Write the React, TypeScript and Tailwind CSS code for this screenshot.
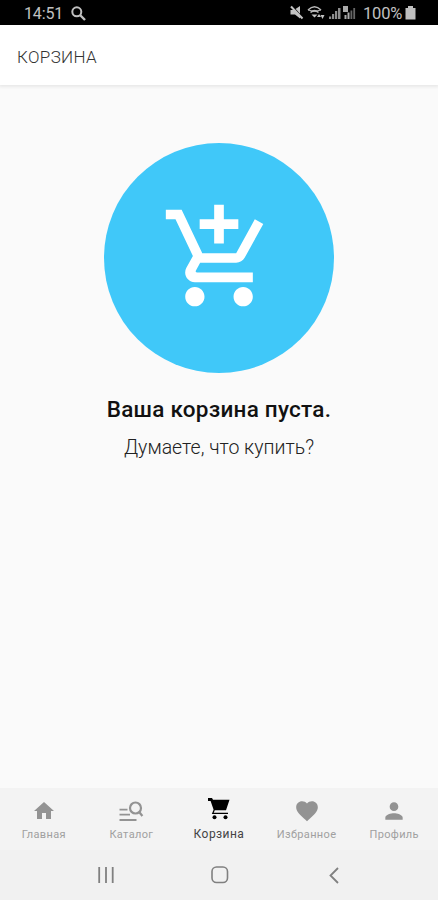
import React from "react";
import { MdAddShoppingCart, MdFavorite, MdHome, MdPerson } from "react-icons/md";

function CatalogIcon() {
  return (
    <svg width="26" height="24" viewBox="0 0 26 24" fill="none" stroke="currentColor" strokeWidth="2">
      <path d="M1.5 10.7h8M1.5 15.7h10.5M1.5 21h17" strokeWidth="1.8" />
      <circle cx="17.5" cy="9" r="5.5" strokeWidth="2.2" />
      <path d="M21.2 13l3.2 4" strokeWidth="2.2" />
    </svg>
  );
}

function CartIcon() {
  return (
    <svg width="24" height="24" viewBox="0 0 24 24" fill="currentColor">
      <path d="M1 1H5L6 2.8H22.5L19 13.2H6.8L3.6 4H1z" />
      <path d="M7.2 13L5.8 16.3H21" fill="none" stroke="currentColor" strokeWidth="1.3" />
      <circle cx="7.5" cy="20.3" r="2" />
      <circle cx="18.5" cy="20.3" r="2" />
    </svg>
  );
}

function StatusIcons() {
  return (
    <svg className="ml-[289px] shrink-0" width="68" height="17" viewBox="0 0 68 17" fill="#c4c4c4">
      <path d="M1.5 6h3.5L11 2v12.500l-5-4H1.500z" />
      <path d="M3 2l11 12" stroke="#000" strokeWidth="1.2" />
      <path d="M2 2.500l11.500 12" stroke="#c4c4c4" strokeWidth="2" />
      <g fill="none" stroke="#b8b8b8" strokeWidth="1.5">
        <path d="M19 6q6.5-6.5 13 0M21.500 8.500q4-3.800 8 0" />
        <path d="M19 6q6.500 3 13 0" strokeWidth="1" />
      </g>
      <path d="M22.5 10.500h6l-3 3zM28 13l2-3 2 3zM31.500 11h4l-2 4z" />
      <path d="M40 12.500h2.200V15H40zM43 10h2.200v5H43zM46 7h2.200v8H46zM49 4h2.500v11H49z" fill="#8c8c8c" />
      <path d="M54 2h5v6h-5zM55.500 11h2v4h-2zM58.500 8.500h2V15h-2z" fill="#aaa" />
      <path d="M61.500 6.500h1.800V15h-1.800zM64.300 4h1.800v11h-1.800z" fill="#666" />
    </svg>
  );
}

const tabs = [
  { label: "Главная", icon: <MdHome size={24} /> },
  { label: "Каталог", icon: <CatalogIcon /> },
  { label: "Корзина", active: true, icon: <CartIcon /> },
  { label: "Избранное", icon: <MdFavorite size={26} /> },
  { label: "Профиль", icon: <MdPerson size={26} /> },
];

export default function App() {
  return (
    <div className="flex h-[900px] w-[438px] flex-col overflow-hidden bg-[#fafafa] font-[Roboto,sans-serif]">
      <div className="flex h-[25px] shrink-0 items-center bg-black text-[#c0c0c0]">
        <div className="flex w-0 items-center overflow-visible whitespace-nowrap">
          <span className="ml-[24px] mt-[3px] text-[16px] leading-none tracking-[-0.15px]">14:51</span>
          <svg className="ml-[8px] mt-[2px] shrink-0" width="15" height="15" viewBox="0 0 15 15" fill="none" stroke="currentColor" strokeWidth="2">
            <circle cx="5.8" cy="5.8" r="4.5" />
            <path d="M9 9l5 5" strokeWidth="2.4" />
          </svg>
        </div>
        <StatusIcons />
        <span className="ml-[6px] mt-[3px] text-[16.5px] leading-none tracking-[-0.2px]">100%</span>
        <svg className="ml-[3px] shrink-0" width="11" height="15" viewBox="0 0 11 15" fill="currentColor">
          <path d="M3 1h5v2h2.5v11.5h-10V3H3z" />
        </svg>
      </div>

      <header className="flex h-[60px] shrink-0 items-center bg-white pl-[17px] shadow-[0_1px_3px_1px_rgba(0,0,0,0.07)]">
        <h1 className="mt-[4px] text-[17px] font-light leading-none tracking-[0.35px] text-[#333]">КОРЗИНА</h1>
      </header>

      <main className="flex grow flex-col items-center pt-[58px]">
        <div className="flex size-[230px] items-center justify-center rounded-full bg-[#40c8f9] text-white">
          <MdAddShoppingCart size={116} className="shrink-0" />
        </div>
        <h2 className="mt-[22px] text-[22.5px] font-medium leading-[28px] tracking-[0.25px] text-[#111]">Ваша корзина пуста.</h2>
        <p className="mt-[12px] text-[19.5px] font-light leading-[26px] text-[#222]">Думаете, что купить?</p>
      </main>

      <nav className="flex h-[62px] shrink-0 bg-[#f3f3f3]">
        {tabs.map((tab) => (
          <div
            key={tab.label}
            className={
              tab.active
                ? "flex flex-1 flex-col items-center text-black"
                : "flex flex-1 flex-col items-center text-[#939393]"
            }
          >
            <div className={tab.active ? "flex h-[40px] items-center pt-[1px]" : "flex h-[40px] items-center pt-[6px]"}>
              {tab.icon}
            </div>
            <span
              className={
                tab.active
                  ? "text-[12px] leading-[13px] tracking-[0.45px] text-[#444]"
                  : "text-[11px] leading-[13px] tracking-[0.35px] text-[#a0a0a0]"
              }
            >
              {tab.label}
            </span>
          </div>
        ))}
      </nav>

      <div className="flex h-[50px] shrink-0 items-center bg-[#f1f1f1] pl-[98px] text-[#808080]">
        <svg width="16" height="16" viewBox="0 0 16 16" fill="none" stroke="currentColor" strokeWidth="1.8">
          <path d="M1.2 0v16M8 0v16M14.7 0v16" />
        </svg>
        <svg className="ml-[97px]" width="18" height="18" viewBox="0 0 18 18" fill="none" stroke="currentColor" strokeWidth="1.6">
          <rect x="1" y="1" width="15.5" height="15.5" rx="4.5" />
        </svg>
        <svg className="ml-[99px]" width="11" height="17" viewBox="0 0 11 17" fill="none" stroke="currentColor" strokeWidth="1.8">
          <path d="M10 1L2.5 8.5 10 16" />
        </svg>
      </div>
    </div>
  );
}
